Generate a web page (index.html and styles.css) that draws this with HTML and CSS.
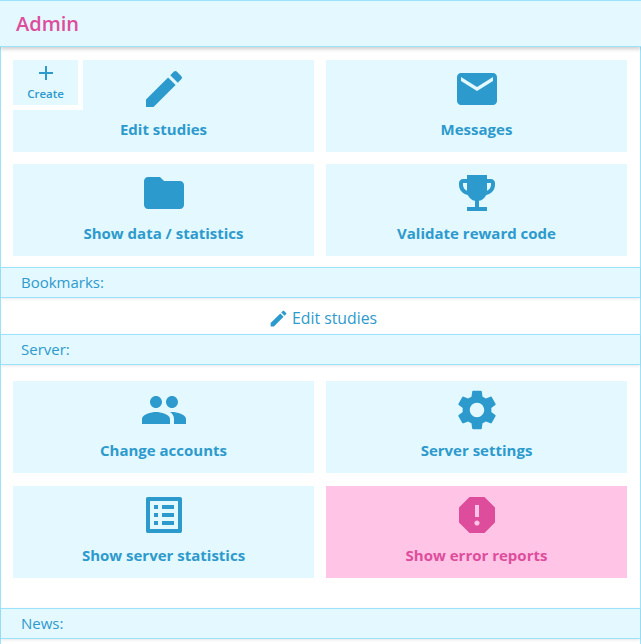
FILE: index.html
```html
<!DOCTYPE html>
<html lang="en">
<head>
    <meta charset="UTF-8">
    <meta name="viewport" content="width=device-width, initial-scale=1.0">
    <title>Admin</title>
    <link rel="stylesheet" href="styles.css">
</head>
<body>
    <div class="page">
        <h1 class="title-bar">Admin</h1>

        <div class="tiles tiles-first">
            <a class="tile" href="#">
                <svg class="icon" viewBox="0 0 24 24"><path d="M3 17.25V21h3.75L17.81 9.94l-3.75-3.75L3 17.25zM20.71 7.04a1 1 0 0 0 0-1.41l-2.34-2.34a1 1 0 0 0-1.41 0l-1.83 1.83 3.75 3.75 1.83-1.83z"/></svg>
                <span>Edit studies</span>
            </a>
            <a class="tile" href="#">
                <svg class="icon" viewBox="0 0 24 24"><path d="M20 4H4c-1.1 0-2 .9-2 2v12c0 1.1.9 2 2 2h16c1.1 0 2-.9 2-2V6c0-1.1-.9-2-2-2zm0 4l-8 5-8-5V6l8 5 8-5v2z"/></svg>
                <span>Messages</span>
            </a>
            <a class="tile" href="#">
                <svg class="icon" viewBox="0 0 24 24"><path d="M10 4H4c-1.1 0-1.99.9-1.99 2L2 18c0 1.1.9 2 2 2h16c1.1 0 2-.9 2-2V8c0-1.1-.9-2-2-2h-8l-2-2z"/></svg>
                <span>Show data / statistics</span>
            </a>
            <a class="tile" href="#">
                <svg class="icon" viewBox="0 0 24 24"><path d="M19 5h-2V3H7v2H5c-1.1 0-2 .9-2 2v1c0 2.55 1.92 4.63 4.39 4.94.63 1.5 1.98 2.63 3.61 2.96V19H7v2h10v-2h-4v-3.1c1.63-.33 2.98-1.46 3.61-2.96C19.08 12.63 21 10.55 21 8V7c0-1.1-.9-2-2-2zM5 8V7h2v3.82C5.84 10.4 5 9.3 5 8zm14 0c0 1.3-.84 2.4-2 2.82V7h2v1z"/></svg>
                <span>Validate reward code</span>
            </a>
            <a class="create-btn" href="#">
                <svg class="create-icon" viewBox="5 5 14 14"><path d="M19 13h-6v6h-2v-6H5v-2h6V5h2v6h6v2z"/></svg>
                <span>Create</span>
            </a>
        </div>

        <h2 class="section-bar">Bookmarks:</h2>
        <a class="bookmark" href="#">
            <svg class="bookmark-icon" viewBox="0 0 24 24"><path d="M3 17.25V21h3.75L17.81 9.94l-3.75-3.75L3 17.25zM20.71 7.04a1 1 0 0 0 0-1.41l-2.34-2.34a1 1 0 0 0-1.41 0l-1.83 1.83 3.75 3.75 1.83-1.83z"/></svg>
            <span>Edit studies</span>
        </a>

        <h2 class="section-bar">Server:</h2>
        <div class="tiles tiles-server">
            <a class="tile" href="#">
                <svg class="icon" viewBox="0 0 24 24"><path d="M16 11c1.66 0 2.99-1.34 2.99-3S17.66 5 16 5c-1.66 0-3 1.34-3 3s1.34 3 3 3zm-8 0c1.66 0 2.99-1.34 2.99-3S9.66 5 8 5C6.34 5 5 6.34 5 8s1.34 3 3 3zm0 2c-2.33 0-7 1.17-7 3.5V19h14v-2.5c0-2.33-4.67-3.5-7-3.5zm8 0c-.29 0-.62.02-.97.05 1.16.84 1.97 1.97 1.97 3.45V19h6v-2.5c0-2.33-4.67-3.5-7-3.5z"/></svg>
                <span>Change accounts</span>
            </a>
            <a class="tile" href="#">
                <svg class="icon" viewBox="0 0 24 24"><path d="M19.14 12.94c.04-.3.06-.61.06-.94 0-.32-.02-.64-.07-.94l2.03-1.58c.18-.14.23-.41.12-.61l-1.92-3.32c-.12-.22-.37-.29-.59-.22l-2.39.96c-.5-.38-1.03-.7-1.62-.94l-.36-2.54c-.04-.24-.24-.41-.48-.41h-3.84c-.24 0-.43.17-.47.41l-.36 2.54c-.59.24-1.13.57-1.62.94l-2.39-.96c-.22-.08-.47 0-.59.22L2.74 8.87c-.12.21-.08.47.12.61l2.03 1.58c-.05.3-.09.63-.09.94s.02.64.07.94l-2.03 1.58c-.18.14-.23.41-.12.61l1.92 3.32c.12.22.37.29.59.22l2.39-.96c.5.38 1.03.7 1.62.94l.36 2.54c.05.24.24.41.48.41h3.84c.24 0 .44-.17.47-.41l.36-2.54c.59-.24 1.13-.56 1.62-.94l2.39.96c.22.08.47 0 .59-.22l1.92-3.32c.12-.22.07-.47-.12-.61l-2.01-1.58zM12 15.6c-1.98 0-3.6-1.62-3.6-3.6s1.62-3.6 3.6-3.6 3.6 1.62 3.6 3.6-1.62 3.6-3.6 3.6z"/></svg>
                <span>Server settings</span>
            </a>
            <a class="tile" href="#">
                <svg class="icon" viewBox="0 0 24 24"><path d="M19 5v14H5V5h14m1.1-2H3.9c-.5 0-.9.4-.9.9v16.2c0 .4.4.9.9.9h16.2c.4 0 .9-.5.9-.9V3.9c0-.5-.5-.9-.9-.9zM11 7h6v2h-6V7zm0 4h6v2h-6v-2zm0 4h6v2h-6zM7 7h2v2H7zm0 4h2v2H7zm0 4h2v2H7z"/></svg>
                <span>Show server statistics</span>
            </a>
            <a class="tile tile-alert" href="#">
                <svg class="icon" viewBox="0 0 24 24"><path d="M15.73 3H8.27L3 8.27v7.46L8.27 21h7.46L21 15.73V8.27L15.73 3zM12 17.3c-.72 0-1.3-.58-1.3-1.3 0-.72.58-1.3 1.3-1.3.72 0 1.3.58 1.3 1.3 0 .72-.58 1.3-1.3 1.3zm1-4.3h-2V7h2v6z"/></svg>
                <span>Show error reports</span>
            </a>
        </div>

        <h2 class="section-bar">News:</h2>
    </div>
</body>
</html>
```

FILE: styles.css
```css
html, body { margin: 0; padding: 0; height: 100%; overflow: hidden; }
body { background: white; color: #2d9acd; font-family: "Open Sans", sans-serif; }
a { color: inherit; text-decoration: none; }
svg { fill: currentColor; display: block; }

.page { border-left: 1px solid #9be3fb; border-right: 1px solid #9be3fb; height: 100%; box-sizing: border-box; }

.title-bar {
    margin: 0 -1px;
    height: 47px;
    box-sizing: border-box;
    padding: 0 16px;
    display: flex;
    align-items: center;
    background: #e3f8ff;
    border-top: 1px solid #9be3fb;
    border-bottom: 1px solid #9be3fb;
    box-shadow: 0 2px 4px rgba(0, 0, 0, 0.2);
    color: #de4d9c;
    font-size: 20px;
    font-weight: 600;
}

.section-bar {
    margin: 0;
    height: 31px;
    box-sizing: border-box;
    padding: 0 20px 2px;
    display: flex;
    align-items: center;
    background: #e3f8ff;
    border-top: 1px solid #9be3fb;
    border-bottom: 1px solid #9be3fb;
    box-shadow: 0 1px 3px rgba(0, 0, 0, 0.1);
    font-size: 15px;
    font-weight: 400;
}

.tiles {
    position: relative;
    display: grid;
    grid-template-columns: 301px 301px;
    grid-auto-rows: 92px;
    column-gap: 12px;
    padding: 0 12px;
}
.tiles-first { row-gap: 12px; padding-top: 13px; padding-bottom: 11px; }
.tiles-server { row-gap: 13px; padding-top: 16px; padding-bottom: 30px; }

.tile {
    background: #e3f8ff;
    display: flex;
    flex-direction: column;
    align-items: center;
    padding-top: 5px;
    box-sizing: border-box;
    font-size: 15px;
    font-weight: 700;
}
.tile span { margin-top: 6px; }
.icon { width: 48px; height: 48px; }
.tile-alert { background: #ffc4e6; color: #de4d9c; }

.create-btn {
    position: absolute;
    left: 12px;
    top: 13px;
    width: 65px;
    height: 45px;
    background: #e3f8ff;
    border-right: 5px solid white;
    border-bottom: 5px solid white;
    display: flex;
    flex-direction: column;
    align-items: center;
    font-size: 11.5px;
    font-weight: 600;
}
.create-icon { width: 14px; height: 14px; margin-top: 6px; margin-bottom: 6px; }

.bookmark {
    height: 36px;
    box-sizing: border-box;
    padding: 3px 0 0 4px;
    display: flex;
    align-items: center;
    justify-content: center;
    gap: 3px;
    font-size: 15.8px;
}
.bookmark-icon { width: 21px; height: 21px; margin-top: 2px; }
```
